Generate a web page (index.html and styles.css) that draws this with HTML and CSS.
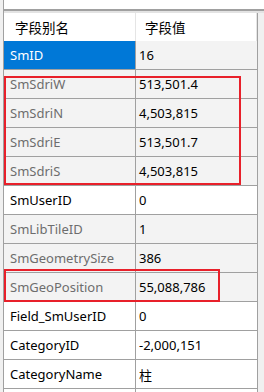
FILE: index.html
```html
<!DOCTYPE html>
<html>
<head>
<meta charset="utf-8">
<link rel="stylesheet" href="styles.css">
</head>
<body>
<div class="panel">
  <div class="topbox"></div>
  <div class="gap"></div>
  <div class="grid">
    <div class="hdr"><div class="c1">字段别名</div><div class="c2">字段值</div></div>
    <div class="row ro sel"><div class="c1">SmID</div><div class="c2">16</div></div>
    <div class="row ro"><div class="c1">SmSdriW</div><div class="c2">513,501.4</div></div>
    <div class="row ro"><div class="c1">SmSdriN</div><div class="c2">4,503,815</div></div>
    <div class="row ro"><div class="c1">SmSdriE</div><div class="c2">513,501.7</div></div>
    <div class="row ro"><div class="c1">SmSdriS</div><div class="c2">4,503,815</div></div>
    <div class="row"><div class="c1">SmUserID</div><div class="c2">0</div></div>
    <div class="row ro"><div class="c1">SmLibTileID</div><div class="c2">1</div></div>
    <div class="row ro"><div class="c1">SmGeometrySize</div><div class="c2">386</div></div>
    <div class="row ro"><div class="c1">SmGeoPosition</div><div class="c2">55,088,786</div></div>
    <div class="row"><div class="c1">Field_SmUserID</div><div class="c2">0</div></div>
    <div class="row"><div class="c1">CategoryID</div><div class="c2">-2,000,151</div></div>
    <div class="row"><div class="c1">CategoryName</div><div class="c2">柱</div></div>
    <div class="row stub"><div class="c1"></div><div class="c2"></div></div>
  </div>
  <div class="mark mark1"></div>
  <div class="mark mark2"></div>
</div>
</body>
</html>
```
FILE: styles.css
```css
html, body {
  margin: 0;
  padding: 0;
  background: #f0f0f0;
  width: 264px;
  height: 392px;
  overflow: hidden;
}
.panel {
  position: relative;
  width: 264px;
  height: 392px;
  overflow: hidden;
  font-family: "Noto Sans", "Noto Sans CJK SC", sans-serif;
  font-size: 13px;
  color: #000;
}
.topbox {
  margin-left: 3px;
  height: 9px;
  background: #fff;
  border-left: 1px solid #a0a0a0;
  border-bottom: 2px solid #a0a0a0;
}
.gap {
  margin-left: 3px;
  height: 2px;
  background: #e3e3e3;
  border-left: 1px solid #a0a0a0;
}
.grid {
  margin-left: 3px;
  width: 253px;
  border-left: 1px solid #a0a0a0;
  border-right: 1px solid #a0a0a0;
}
.hdr, .row {
  display: grid;
  grid-template-columns: 132px 121px;
}
.hdr {
  height: 28px;
  background: #fff;
  font-size: 13.5px;
}
.hdr > div {
  display: flex;
  align-items: center;
  border-right: 1px solid #e5e5e5;
}
.hdr .c1 { padding-left: 11px; }
.hdr .c2 { padding-left: 9px; }
.row {
  height: 29px;
  background: #fff;
}
.row > div {
  display: flex;
  align-items: center;
  border-right: 1px solid #a0a0a0;
  border-bottom: 1px solid #a0a0a0;
  box-sizing: border-box;
  white-space: nowrap;
  overflow: hidden;
}
.row .c1 { padding-left: 6px; }
.row .c2 { padding-left: 3px; }
.row > div:last-child { border-right: none; }
.row.stub { height: 3px; }
.row.stub > div { border-bottom: none; }
.ro { background: #f3f3f3; }
.ro .c1 { color: #6d6d6d; }
.sel .c1 { background: #0078d7; color: #fff; }
.mark {
  position: absolute;
  border: 2px solid #e8202a;
  box-sizing: border-box;
}
.mark1 { left: 4px; top: 76px; width: 237px; height: 109px; }
.mark2 { left: 4px; top: 269px; width: 216px; height: 33px; }
```
